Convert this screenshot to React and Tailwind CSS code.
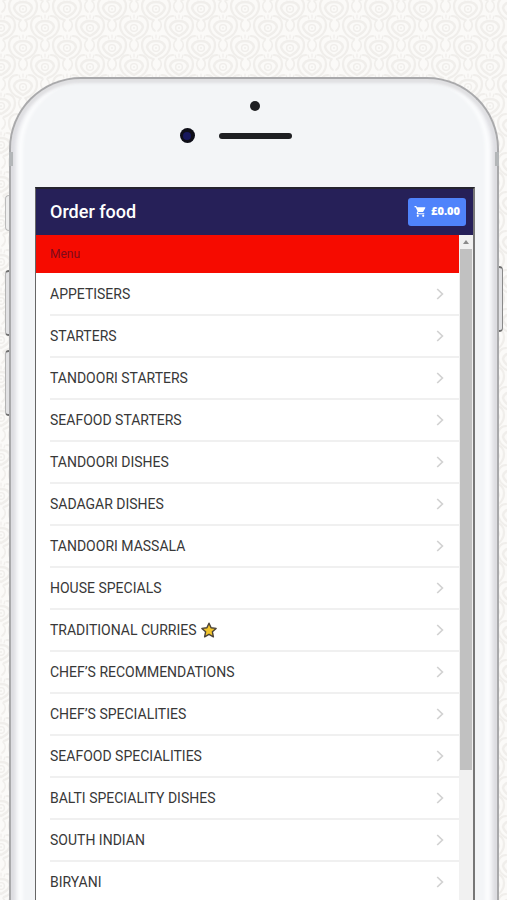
import { MdShoppingCart } from 'react-icons/md';

const CATEGORIES = [
  { name: 'APPETISERS' },
  { name: 'STARTERS' },
  { name: 'TANDOORI STARTERS' },
  { name: 'SEAFOOD STARTERS' },
  { name: 'TANDOORI DISHES' },
  { name: 'SADAGAR DISHES' },
  { name: 'TANDOORI MASSALA' },
  { name: 'HOUSE SPECIALS' },
  { name: 'TRADITIONAL CURRIES', starred: true },
  { name: 'CHEF’S RECOMMENDATIONS' },
  { name: 'CHEF’S SPECIALITIES' },
  { name: 'SEAFOOD SPECIALITIES' },
  { name: 'BALTI SPECIALITY DISHES' },
  { name: 'SOUTH INDIAN' },
  { name: 'BIRYANI' },
];

// Spots where the damask motif repeats inside one tile
const MOTIFS = [[1, 28], [45, 28], [90, 28], [23, 9], [67, 9], [23, 48], [67, 48], [1, -11], [45, -11], [90, -11]];

function Wallpaper() {
  return (
    <svg className="absolute inset-0 h-full w-full" aria-hidden="true">
      <defs>
        <g id="motif" fill="none" stroke="#f0eeeb" strokeWidth="1.8" strokeLinecap="round">
          <path d="M0 8C-4 6-8 3-9-1C-8-5-4-7 0-7C4-7 8-5 9-1C8 3 4 6 0 8Z" strokeWidth="2.4" />
          <circle r="3.4" strokeWidth="1.4" />
          <circle r="1" fill="#f0eeeb" stroke="none" />
          <path d="M-3 11C-9 9-14 4-14-3C-14-8-11-12-6-12M3 11C9 9 14 4 14-3C14-8 11-12 6-12" strokeWidth="2.2" />
          <path d="M-3-9L-4-12M0-10V-13M3-9L4-12" strokeWidth="1.2" />
          <path d="M-20-8C-16-4-18 1-21 3M20-8C16-4 18 1 21 3" strokeWidth="1.6" />
        </g>
        <pattern id="damask" width="89" height="39" patternUnits="userSpaceOnUse">
          <rect width="89" height="39" fill="#fbfaf8" />
          {MOTIFS.map(([x, y]) => (
            <use key={`${x}-${y}`} href="#motif" x={x} y={y} />
          ))}
        </pattern>
      </defs>
      <rect width="100%" height="100%" fill="url(#damask)" />
    </svg>
  );
}

function Chevron() {
  return (
    <svg className="h-3 w-2 shrink-0" viewBox="0 0 8 12" fill="none" stroke="#d2d2d2" strokeWidth="1.7" aria-hidden="true">
      <path d="M1.2 1L6.4 6L1.2 11" />
    </svg>
  );
}

function Star() {
  return (
    <svg className="h-4 w-4" viewBox="0 0 16 16" aria-label="Favourite" role="img">
      <path
        d="M8 1.2L10.1 5.8L15.1 6.4L11.4 9.8L12.4 14.8L8 12.3L3.6 14.8L4.6 9.8L0.9 6.4L5.9 5.8Z"
        fill="#f2c52c" stroke="#4a4238" strokeWidth="1.4" strokeLinejoin="round"
      />
    </svg>
  );
}

function SideButtons() {
  const edge = 'absolute w-1 border-y-2 border-y-[#6f6f6f] bg-[#e2e2e4]';
  return (
    <>
      <span className="absolute -left-1 top-[118px] h-9 w-1 rounded-l-sm border border-r-0 border-[#bcbcbc] bg-[#eeeeee]" />
      <span className={`${edge} -left-1 top-[193px] h-[66px] rounded-l-sm border-l border-l-[#b4b4b4]`} />
      <span className={`${edge} -left-1 top-[273px] h-[66px] rounded-l-sm border-l border-l-[#b4b4b4]`} />
      <span className={`${edge} -right-1 top-[189px] h-[66px] rounded-r-sm border-r border-r-[#8a8a8a]`} />
    </>
  );
}

function Header() {
  return (
    <header className="flex h-[46px] shrink-0 items-center justify-between bg-[#262058] pr-[7px] pb-px pl-3.5">
      <h1 className="text-lg font-medium text-white">Order food</h1>
      <button type="button" className="flex h-7 items-center gap-1 rounded-[3px] bg-[#4f83fb] px-1.5 font-['Open_Sans',sans-serif] text-[11px] font-extrabold text-white">
        <MdShoppingCart size={13} />
        £0.00
      </button>
    </header>
  );
}

function Scrollbar() {
  return (
    <div className="flex w-3.5 shrink-0 flex-col items-center bg-[#f1f1f1]" aria-hidden="true">
      <div className="flex h-3.5 shrink-0 items-center">
        <svg className="h-1 w-1.5" viewBox="0 0 6 4">
          <path d="M0 4L3 0L6 4Z" fill="#8b8b8b" />
        </svg>
      </div>
      <div className="h-[76%] w-3 bg-[#c1c1c1]" />
    </div>
  );
}

export default function App() {
  return (
    <div className="relative h-screen overflow-hidden bg-[#faf9f7] pt-[77px] pr-2 pl-[9px] font-['Roboto',sans-serif]">
      <Wallpaper />

      <div className="relative h-full">
        <SideButtons />
        <div className="relative -mb-5 flex h-[calc(100%+20px)] flex-col rounded-t-[72px] border-2 border-b-0 border-[#a9a9ab] bg-[#f3f5f7] pr-[22px] pl-6 shadow-[inset_0_4px_3px_#e0e0e2,inset_5px_0_4px_#dcdce1,inset_-5px_0_4px_#dcdce1,inset_12px_0_3px_#fbfcfd,inset_-12px_0_3px_#fbfcfd]">
          {/* Antenna bands */}
          <span className="absolute top-[73px] -left-0.5 h-3.5 w-1 bg-[#b3b6b8]" />
          <span className="absolute top-[73px] -right-0.5 h-3.5 w-1 bg-[#b3b6b8]" />

          {/* Sensor, camera and speaker */}
          <div className="flex h-[108px] shrink-0 flex-col items-center gap-[17px] pt-[22px]">
            <span className="h-2.5 w-2.5 rounded-full bg-[#1e1f22]" />
            <div className="grid w-full grid-cols-[1fr_73px_1fr] items-center">
              <span className="mr-6 flex h-[15px] w-[15px] items-center justify-center justify-self-end rounded-full bg-[#0e0e18]">
                <span className="h-2 w-2 rounded-full bg-[#17175c]" />
              </span>
              <span className="h-1.5 rounded-full bg-[#1e1f22]" />
            </div>
          </div>

          <div className="flex min-h-0 flex-1 flex-col border-t-2 border-r-2 border-l border-t-[#25242f] border-r-[#777777] border-l-[#666666] bg-white">
            <Header />
            <div className="flex min-h-0 flex-1">
              <main className="min-w-0 flex-1 overflow-hidden">
                <h2 className="flex h-[38px] items-center bg-[#f60b00] pl-3.5 text-xs text-[#7d0a1c]">Menu</h2>
                <ul className="pt-px">
                  {CATEGORIES.map((category) => (
                    <li key={category.name} className="pl-3.5">
                      <a href="#" className="flex h-[42px] items-center justify-between border-b-2 border-[#f0f0f0] pr-[15px] text-sm text-[#383838]">
                        <span className="flex items-center gap-[5px]">
                          {category.name}
                          {category.starred && <Star />}
                        </span>
                        <Chevron />
                      </a>
                    </li>
                  ))}
                </ul>
              </main>
              <Scrollbar />
            </div>
          </div>
        </div>
      </div>
    </div>
  );
}
